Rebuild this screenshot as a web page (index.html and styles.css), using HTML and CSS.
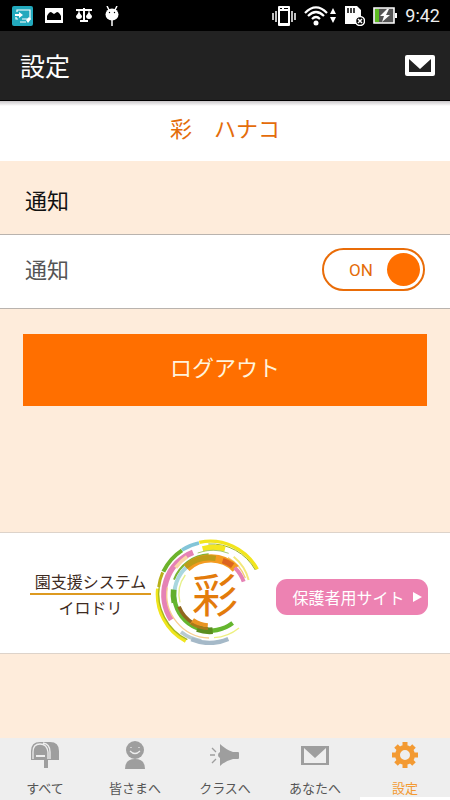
FILE: index.html
```html
<!DOCTYPE html>
<html lang="ja">
<head>
<meta charset="utf-8">
<meta name="viewport" content="width=device-width, initial-scale=1">
<title>設定</title>
<link rel="stylesheet" href="styles.css">
</head>
<body>
<div class="status">
  <div class="status-group status-left">
    <svg width="21" height="20" viewBox="0 0 21 20"><rect width="21" height="20" rx="2" fill="#22a9bd"/><path d="M5 6V4h13v9h-8M6 13H4v-2M8 16h6" fill="none" stroke="#fff" stroke-width="1.200"/><path d="M3 8h4V6l4 3-4 3v-2H3zM14 14l3-3 2 2-3 4z" fill="#fff"/></svg>
    <svg width="18" height="15" viewBox="0 0 18 15"><path d="M0 0h18v15H0z" fill="#fff"/><path d="M2 12V8q2-4 4-4l3 2 3-2q2 0 4 4v4z" fill="#000"/></svg>
    <svg width="18" height="15" viewBox="0 0 18 15"><path d="M1 2h16M9 0v13M5 13h8" stroke="#fff" stroke-width="2" fill="none"/><path d="M4 3v4M14 3v4" stroke="#fff"/><path d="M4 4l3 4q0 3-3 3T1 8zM14 4l3 4q0 3-3 3t-3-3z" fill="#fff"/></svg>
    <svg width="14" height="20" viewBox="0 0 14 20"><path d="M2 0l2 4M12 0l-2 4M7 13v7" stroke="#fff" stroke-width="1.500"/><ellipse cx="7" cy="8.500" rx="6.500" ry="6" fill="#fff"/><circle cx="4.500" cy="6.500" r=".7"/><circle cx="9.500" cy="6.500" r=".7"/></svg>
  </div>
  <div class="status-group status-right">
    <svg width="24" height="20" viewBox="0 0 24 20"><path fill="#fff" fill-rule="evenodd" d="M7 0h10q1 0 1 1v18q0 1-1 1H7q-1 0-1-1V1q0-1 1-1zM8 5v12h8V5zM8 2v1h2V2zM12 2v1h4V2z"/><path d="M1 7v7M4 5v11M20 5v11M23 7v7" stroke="#fff" stroke-width="1.500"/></svg>
    <svg width="33" height="20" viewBox="0 0 33 20"><g fill="none" stroke="#fff" stroke-width="2.200"><path d="M1 7q11-11 22 0M4 10q8-8 16 0M8 13q4-4 8 0"/></g><circle cx="12" cy="17" r="2.500" fill="#fff"/><path d="M26 8l3-6 3 6zM26 11h6l-3 6z" fill="#fff"/></svg>
    <svg width="20" height="20" viewBox="0 0 20 20"><path d="M0 0h12l4 4v14H0z" fill="#fff"/><path d="M3 2v5M6 2v5M9 2v5" stroke="#000" stroke-width="1.500"/><circle cx="15" cy="15" r="4.500" fill="#000" stroke="#fff" stroke-width="1.500"/><path d="M13 13l4 4M17 13l-4 4" stroke="#fff" stroke-width="1.500"/></svg>
    <svg width="24" height="17" viewBox="0 0 24 17"><path d="M1 1h20v15H1z" fill="#555" stroke="#fff" stroke-width="1.600"/><path d="M2 2h4v13H2z" fill="#5dbb21"/><path d="M22 6h2v5h-2zM14 2l-7 7h4l-2 6 8-7h-4l3-6z" fill="#fff"/></svg>
    <span class="clock">9:42</span>
  </div>
</div>
<header class="header">
  <h1 class="title">設定</h1>
  <button class="mail" type="button" aria-label="メール"><svg width="30" height="21" viewBox="0 0 30 21"><rect width="30" height="21" rx="2" fill="#fff"/><path d="M4 4v13h22V4L15 14z" fill="#222"/></svg></button>
</header>
<main class="main">
  <p class="user">彩　ハナコ</p>
  <h2 class="section">通知</h2>
  <div class="row">
    <label class="row-label" for="notify">通知</label>
    <span class="switch">
      <input class="switch-input" id="notify" type="checkbox" role="switch" checked>
      <span class="switch-text">ON</span><span class="switch-knob"></span>
    </span>
  </div>
  <button class="logout" type="button">ログアウト</button>
  <section class="banner">
    <div class="brand"><span>園支援システム</span><span class="brand-name">イロドリ</span></div>
    <svg class="logo" width="105" height="107" viewBox="45 25 315 321" role="img" aria-label="彩">
      <g fill="none">
        <path d="M137 335A160 160 0 0 1 53 177" stroke="#f0e51c" stroke-width="10"/>
        <path d="M142 330A155 155 0 0 1 58 167" stroke="#a5b81c" stroke-width="4"/>
        <path d="M56 172A159 159 0 0 1 68 128" stroke="#b8b01a" stroke-width="9"/>
        <path d="M70 126A158 158 0 0 1 126 62" stroke="#6db32c" stroke-width="12"/>
        <path d="M126 61A158 158 0 0 1 177 40" stroke="#83c5d8" stroke-width="10"/>
        <path d="M178 38A160 160 0 0 1 352 119" stroke="#f2e51c" stroke-width="10"/>
        <path d="M205 43A153 153 0 0 1 346 121" stroke="#9ab229" stroke-width="3"/>
        <path d="M159 68A137 137 0 0 0 94 270" stroke="#e582b5" stroke-width="17"/>
        <path d="M188 58A138 138 0 0 1 255 58" stroke="#f4e620" stroke-width="17"/>
        <path d="M173 70A130 130 0 0 1 266 71" stroke="#a6c96c" stroke-width="3"/>
        <path d="M281 81A132 132 0 0 1 326 151" stroke="#f3e87b" stroke-width="6"/>
        <path d="M264 84A122 122 0 0 1 316 145" stroke="#f5cb75" stroke-width="4"/>
        <path d="M107 114A132 132 0 0 1 141 81" stroke="#fbd6a8" stroke-width="11"/>
        <path d="M102 150A119 119 0 0 1 206 74" stroke="#7ab434" stroke-width="6"/>
        <path d="M207 325A131 131 0 0 1 82 173" stroke="#f8cf91" stroke-width="4"/>
        <path d="M105 213A109 109 0 0 1 140 112" stroke="#a9d7df" stroke-width="12"/>
        <path d="M120 218A96 96 0 0 1 136 136" stroke="#e6f08a" stroke-width="4"/>
        <path d="M140 115A106 106 0 0 1 287 117" stroke="#f49b20" stroke-width="25"/>
        <path d="M137 111A111 111 0 0 1 227 86" stroke="#bd9c18" stroke-width="16"/>
        <path d="M248 93A108 108 0 0 1 278 108" stroke="#dc6420" stroke-width="17"/>
        <path d="M284 114A109 109 0 0 1 311 156" stroke="#e582b5" stroke-width="12"/>
        <path d="M101 180A112 112 0 0 0 103 219" stroke="#62ae2d" stroke-width="17"/>
        <path d="M104 213A109 109 0 0 0 278 280" stroke="#65b62f" stroke-width="13"/>
        <path d="M117 231A102 102 0 0 0 160 281" stroke="#90661f" stroke-width="11"/>
        <path d="M156 274A97 97 0 0 0 203 291" stroke="#e99522" stroke-width="21"/>
        <path d="M172 297A107 107 0 0 0 218 303" stroke="#5b8d20" stroke-width="20"/>
        <path d="M153 281A104 104 0 0 0 204 297" stroke="#a87a1a" stroke-width="8"/>
        <path d="M222 324A130 130 0 0 0 297 295" stroke="#edf080" stroke-width="4"/>
        <path d="M123 307A142 142 0 0 0 184 334" stroke="#b8cad0" stroke-width="11"/>
        <path d="M154 329A145 145 0 0 0 265 328" stroke="#a5b9c8" stroke-width="13"/>
      </g>
      <text class="logo-text" x="225" y="248" text-anchor="middle">彩</text>
    </svg>
    <a class="site" href="#">保護者用サイト<svg width="9" height="10" viewBox="0 0 9 10"><path d="M0 0l9 5-9 5z" fill="#fff"/></svg></a>
  </section>
</main>
<nav class="tabs">
  <a class="tab" href="#"><svg width="30" height="28" viewBox="0 0 30 28"><path d="M1 19V10q0-9 9-9h10q9 0 9 9v9H18v8h-4v-8z" fill="#9e9e9e"/><path d="M3 18V11q0-8 7-8t8 8v7M13 2q7 1 7 9v7" fill="none" stroke="#eee" stroke-width="1.300"/><path d="M6 14h9v2H6z" fill="#eee"/></svg>すべて</a>
  <a class="tab" href="#"><svg width="30" height="28" viewBox="0 0 30 28"><circle cx="15" cy="9" r="9" fill="#9e9e9e"/><path d="M5 28q0-10 10-10t10 10z" fill="#9e9e9e"/><path d="M10 10q5 5 10 0M11 6v1M19 6v1" fill="none" stroke="#eee" stroke-width="1.200"/></svg>皆さまへ</a>
  <a class="tab" href="#"><svg width="30" height="28" viewBox="0 0 30 28"><path d="M10 3q5 5 13 8h5q1 0 1 1v5q0 1-1 1h-5q-8 2-13 7v-8q-2-1-2-3t2-3z" fill="#9e9e9e"/><path d="M2 7l4 4M0 14h5M2 22l4-4" stroke="#9e9e9e" stroke-width="1.300"/></svg>クラスへ</a>
  <a class="tab" href="#"><svg width="30" height="28" viewBox="0 0 30 28"><path d="M1 5h28v19H1z" fill="#9e9e9e"/><path d="M4 7v15h22V7L15 17z" fill="#eee"/></svg>あなたへ</a>
  <a class="tab tab-active" href="#" aria-current="page"><svg width="30" height="28" viewBox="0 0 30 28"><circle cx="15" cy="14" r="7.500" fill="none" stroke="#f39a32" stroke-width="5"/><path d="M15 1v4M15 23v4M2 14h4M24 14h4M6 5l3 3M21 20l3 3M24 5l-3 3M9 20l-3 3" stroke="#f39a32" stroke-width="5"/></svg>設定</a>
</nav>
</body>
</html>
```

FILE: styles.css
```css
* {
  box-sizing: border-box;
}

body {
  display: flex;
  flex-direction: column;
  min-height: 100vh;
  margin: 0;
  background: #feecdb;
  color: #111;
  font-family: "Noto Sans CJK JP", sans-serif;
}

h1, h2, p {
  margin: 0;
  font-weight: 400;
}

button {
  border: 0;
  padding: 0;
  font: inherit;
}

a {
  text-decoration: none;
}

.status {
  display: flex;
  justify-content: space-between;
  align-items: center;
  height: 31px;
  padding: 0 10px 0 12px;
  background: #000;
}

.status-group {
  display: flex;
  align-items: center;
}

.status-left {
  gap: 12px;
}

.status-right {
  gap: 8px;
}

.clock {
  color: #eee;
  font: 18px/20px Roboto, sans-serif;
}

.header {
  display: flex;
  justify-content: space-between;
  align-items: center;
  height: 70px;
  padding: 0 15px 0 20px;
  border-bottom: 1px solid #000;
  background: #222;
}

.title {
  padding-bottom: 2px;
  color: #fff;
  font-size: 25px;
  line-height: 36px;
}

.mail {
  display: flex;
  background: none;
}

.main {
  display: flex;
  flex-direction: column;
}

.user {
  padding: 10px 0 18px;
  background: linear-gradient(#c8c5c8, #fff 5px);
  color: #e46c0a;
  font-size: 22px;
  line-height: 32px;
  text-align: center;
}

.section {
  padding: 22px 25px 19px;
  font-size: 22px;
  line-height: 32px;
}

.row {
  display: flex;
  justify-content: space-between;
  align-items: center;
  height: 75px;
  padding: 0 25px 4px;
  border: solid #b9b3ae;
  border-width: 1px 0;
  background: #fff;
}

.row-label {
  padding-bottom: 4px;
  color: #555;
  font-size: 22px;
  line-height: 32px;
}

.switch {
  display: flex;
  position: relative;
  justify-content: space-between;
  align-items: center;
  width: 103px;
  height: 43px;
  padding: 0 3px 0 25px;
  border: 2px solid #e96c08;
  border-radius: 22px;
}

.switch-input {
  position: absolute;
  inset: 0;
  width: 100%;
  height: 100%;
  margin: 0;
  opacity: 0;
}

.switch-text {
  color: #e46c0a;
  font: 17px/20px Roboto, sans-serif;
}

.switch-knob {
  width: 33px;
  height: 33px;
  border-radius: 50%;
  background: #ff6f00;
}

.logout {
  height: 72px;
  margin: 25px 23px 126px;
  padding-bottom: 8px;
  background: #ff6f00;
  color: #fff3dc;
  font-size: 22px;
}

.banner {
  display: flex;
  align-items: center;
  height: 122px;
  padding: 0 22px 0 30px;
  border: solid #ddd3ca;
  border-width: 1px 0;
  background: #fff;
}

.brand {
  display: flex;
  flex-direction: column;
  width: 121px;
  padding-top: 2px;
  color: #3e2b22;
  font-size: 16px;
  line-height: 24px;
  text-align: center;
  white-space: nowrap;
}

.brand-name {
  border-top: 2px solid #dd9a20;
}

.logo {
  flex: none;
  margin: 0 0 4px 4px;
}

.logo-text {
  fill: #e37b0b;
  font-family: "Noto Sans CJK JP", sans-serif;
  font-size: 138px;
}

.site {
  display: flex;
  align-items: center;
  justify-content: center;
  gap: 8px;
  width: 152px;
  height: 36px;
  margin: 8px 0 0 auto;
  padding-left: 10px;
  border-radius: 11px;
  background: #ed82b2;
  color: #fff;
  font-size: 16px;
  line-height: 24px;
  white-space: nowrap;
}

.tabs {
  display: grid;
  grid-template-columns: repeat(5, 1fr);
  height: 62px;
  margin-top: auto;
  background: #eee;
}

.tab {
  display: flex;
  flex-direction: column;
  align-items: center;
  gap: 11px;
  padding-top: 3px;
  color: #555;
  font-size: 13px;
  line-height: 16px;
}

.tab-active {
  border-bottom: 3px solid #fff;
  color: #f39a32;
}
```
